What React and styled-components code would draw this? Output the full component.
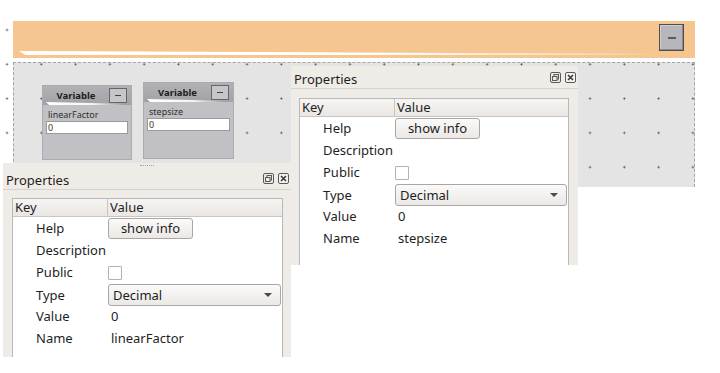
import React from "react";
import styled, { createGlobalStyle } from "styled-components";

const GlobalStyle = createGlobalStyle`
  html, body {
    margin: 0;
    padding: 0;
    background: #ffffff;
  }
  body {
    font-family: "Noto Sans", "DejaVu Sans", sans-serif;
    color: #1e1e1e;
  }
`;

const DOT = "radial-gradient(circle, #4a4a4a 0.7px, rgba(74,74,74,0) 1.3px)";

const Page = styled.div`
  position: relative;
  width: 720px;
  height: 373px;
  overflow: hidden;
  background: #fff;
`;

// graphics view with the dotted grid
const Scene = styled.div`
  width: 695px;
  height: 187px;
  box-sizing: border-box;
  padding: 21px 0 0 13px;
  display: flex;
  flex-direction: column;
  background-color: #fff;
  background-image: ${DOT};
  background-size: 34.3px 34.3px;
  background-position: -10.15px 12.85px;
`;

const Banner = styled.div`
  position: relative;
  height: 37px;
  flex-shrink: 0;
  background: #f5c690;
  display: flex;
  justify-content: flex-end;
  align-items: flex-start;
  padding: 3px 11px 0 0;
  box-sizing: border-box;

  &::after {
    content: "";
    position: absolute;
    left: 6px;
    bottom: 3px;
    width: 645px;
    height: 4px;
    background: linear-gradient(
      to right,
      #ffffff 0%,
      #ffffff 55%,
      rgba(255, 255, 255, 0.35) 90%,
      rgba(255, 255, 255, 0) 100%
    );
    clip-path: polygon(0 0, 100% 70%, 100% 100%, 1% 100%);
  }
`;

const BannerButton = styled.div`
  width: 25px;
  height: 27px;
  box-sizing: border-box;
  background: #b6b6bb;
  border: 1px solid #4e4e52;
  box-shadow: inset -1px -1px 0 #8a8a8e, inset 1px 1px 0 #d0d0d4;
  display: flex;
  align-items: center;
  justify-content: center;

  &::before {
    content: "";
    width: 8px;
    height: 2px;
    background: #5a5a5e;
  }
`;

const Canvas = styled.div`
  position: relative;
  margin-top: 4px;
  flex: 1;
  box-sizing: border-box;
  border: 1px dashed #a4a4a4;
  border-bottom: none;
  background-color: #e4e4e4;
  background-image: ${DOT};
  background-size: 34.3px 34.3px;
  background-origin: border-box;
  background-position: 11.15px 19.45px;
`;

// nodes sit on the free canvas at their own coordinates
const Node = styled.div`
  position: absolute;
  left: ${(p) => p.$x}px;
  top: ${(p) => p.$y}px;
  width: ${(p) => p.$w}px;
  height: ${(p) => p.$h}px;
  box-sizing: border-box;
  background: #c1c1c5;
  border: 1px solid #acacb0;
  display: flex;
  flex-direction: column;
`;

const NodeHeader = styled.div`
  position: relative;
  height: 19px;
  flex-shrink: 0;
  display: flex;
  align-items: center;
  padding: 0 4px 0 0;
  background: linear-gradient(#b2b2b6, #a2a2a6);

  &::after {
    content: "";
    position: absolute;
    left: 3px;
    bottom: 0;
    width: 78px;
    height: 3px;
    background: linear-gradient(to right, #ffffff 0%, #f4f4f6 60%, rgba(255, 255, 255, 0) 100%);
    clip-path: polygon(0 0, 100% 60%, 100% 100%, 4% 100%);
  }
`;

const NodeTitle = styled.span`
  flex: 1;
  text-align: center;
  font-size: 9.5px;
  font-weight: 700;
  color: #1c1c1c;
`;

const NodeMinus = styled.div`
  width: 18px;
  height: 15px;
  box-sizing: border-box;
  background: #c6c6ca;
  border: 1px solid #66666a;
  display: flex;
  align-items: center;
  justify-content: center;
  margin-top: -1px;

  &::before {
    content: "";
    width: 6px;
    height: 1px;
    background: #444;
  }
`;

const NodeBody = styled.div`
  padding: 4px 3px 0 3px;
  display: flex;
  flex-direction: column;
`;

const NodeLabel = styled.span`
  font-size: 9px;
  line-height: 12px;
  color: #2e2e2e;
  padding-left: 2px;
`;

const NodeInput = styled.div`
  height: 13px;
  box-sizing: border-box;
  background: #fff;
  border: 1px solid #9a9a9a;
  font-size: 9px;
  line-height: 11px;
  padding-left: 1px;
  color: #4a3410;
`;

// dock windows float above the scene
const Dock = styled.div`
  position: absolute;
  left: ${(p) => p.$x}px;
  top: ${(p) => p.$y}px;
  width: ${(p) => p.$w}px;
  height: ${(p) => p.$h}px;
  background: #efebe7;
  display: flex;
  flex-direction: column;
  overflow: hidden;
`;

const Grip = styled.div`
  height: 4px;
  flex-shrink: 0;
  display: flex;
  justify-content: center;
  align-items: flex-start;

  &::before {
    content: "";
    width: 14px;
    margin-top: 2px;
    border-top: 1px dotted #a0a0a0;
  }
`;

const TitleBar = styled.div`
  height: 23px;
  flex-shrink: 0;
  box-sizing: border-box;
  display: flex;
  align-items: center;
  padding: 3px 2px 0 3px;
  border-bottom: 1px solid #d6d2ce;
  font-size: 13px;
`;

const TitleText = styled.span`
  flex: 1;
`;

const TitleIcons = styled.div`
  display: flex;
  gap: 4px;
  margin-top: -2px;
`;

const Table = styled.div`
  flex: 1;
  margin: ${(p) => p.$mt}px ${(p) => p.$mr}px 0 ${(p) => p.$ml}px;
  border: 1px solid #b8b8b8;
  border-bottom: none;
  background: #fff;
  font-size: 13px;
`;

const HeadRow = styled.div`
  display: grid;
  grid-template-columns: 94px 1fr;
  height: 17px;
  background: linear-gradient(#f7f5f3, #e9e6e3);
  border-bottom: 1px solid #c8c5c2;
  line-height: 17px;
`;

const HeadCell = styled.div`
  padding-left: 2px;
  & + & {
    border-left: 1px solid #c8c5c2;
  }
`;

const Row = styled.div`
  display: grid;
  grid-template-columns: 95px 1fr;
  height: 22px;
  align-items: center;
`;

const KeyCell = styled.div`
  padding-left: 23px;
`;

const ValueText = styled.div`
  padding-left: 3px;
`;

const InfoButton = styled.div`
  width: 85px;
  height: 21px;
  margin-top: 1px;
  box-sizing: border-box;
  border: 1px solid #a9a6a3;
  border-radius: 3px;
  background: linear-gradient(#fbfaf9, #ebe8e5);
  text-align: center;
  line-height: 19px;
`;

const CheckBox = styled.div`
  width: 14px;
  height: 14px;
  box-sizing: border-box;
  border: 1px solid #b3b0ad;
  border-radius: 1px;
  background: #fff;
  margin-top: 2px;
`;

const Combo = styled.div`
  height: 22px;
  margin-right: 1px;
  margin-top: 1px;
  box-sizing: border-box;
  border: 1px solid #a9a6a3;
  border-radius: 3px;
  background: linear-gradient(#fbfaf9, #ebe8e5);
  display: flex;
  align-items: center;
  padding: 0 8px 1px 4px;
`;

const ComboText = styled.span`
  flex: 1;
`;

const Arrow = styled.span`
  width: 0;
  height: 0;
  margin-top: 1px;
  border-left: 4px solid transparent;
  border-right: 4px solid transparent;
  border-top: 4px solid #4a4a4a;
`;

const FloatIcon = () => (
  <svg width="11" height="11" viewBox="0 0 11 11">
    <rect x="0.5" y="0.5" width="10" height="10" rx="1.5" fill="none" stroke="#5a5a5a" />
    <rect x="4" y="2.5" width="4.5" height="4.5" fill="none" stroke="#5a5a5a" />
    <rect x="2.5" y="4.5" width="4.5" height="4" fill="#efebe7" stroke="#5a5a5a" />
  </svg>
);

const CloseIcon = () => (
  <svg width="11" height="11" viewBox="0 0 11 11">
    <rect x="0.5" y="0.5" width="10" height="10" rx="1.5" fill="#f4f2f0" stroke="#5a5a5a" />
    <path d="M3 3 L8 8 M8 3 L3 8" stroke="#3a3a3a" strokeWidth="1.6" />
  </svg>
);

const VariableNode = ({ x, y, w, h, name }) => (
  <Node $x={x} $y={y} $w={w} $h={h}>
    <NodeHeader>
      <NodeTitle>Variable</NodeTitle>
      <NodeMinus />
    </NodeHeader>
    <NodeBody>
      <NodeLabel>{name}</NodeLabel>
      <NodeInput>0</NodeInput>
    </NodeBody>
  </Node>
);

const PropertiesDock = ({ x, y, w, h, name, grip, mt, ml, mr }) => (
  <Dock $x={x} $y={y} $w={w} $h={h}>
    {grip && <Grip />}
    <TitleBar>
      <TitleText>Properties</TitleText>
      <TitleIcons>
        <FloatIcon />
        <CloseIcon />
      </TitleIcons>
    </TitleBar>
    <Table $mt={mt} $ml={ml} $mr={mr}>
      <HeadRow>
        <HeadCell>Key</HeadCell>
        <HeadCell>Value</HeadCell>
      </HeadRow>
      <Row>
        <KeyCell>Help</KeyCell>
        <InfoButton>show info</InfoButton>
      </Row>
      <Row>
        <KeyCell>Description</KeyCell>
        <div />
      </Row>
      <Row>
        <KeyCell>Public</KeyCell>
        <CheckBox />
      </Row>
      <Row>
        <KeyCell>Type</KeyCell>
        <Combo>
          <ComboText>Decimal</ComboText>
          <Arrow />
        </Combo>
      </Row>
      <Row>
        <KeyCell>Value</KeyCell>
        <ValueText>0</ValueText>
      </Row>
      <Row>
        <KeyCell>Name</KeyCell>
        <ValueText>{name}</ValueText>
      </Row>
    </Table>
  </Dock>
);

export default function App() {
  return (
    <Page>
      <GlobalStyle />
      <Scene>
        <Banner>
          <BannerButton />
        </Banner>
        <Canvas>
          <VariableNode x={28} y={22} w={90} h={75} name="linearFactor" />
          <VariableNode x={129} y={19} w={91} h={77} name="stepsize" />
        </Canvas>
      </Scene>
      <PropertiesDock x={291} y={66} w={287} h={199} name="stepsize" mt={9} ml={8} mr={9} />
      <PropertiesDock x={3} y={163} w={288} h={194} name="linearFactor" grip mt={8} ml={9} mr={8} />
    </Page>
  );
}
